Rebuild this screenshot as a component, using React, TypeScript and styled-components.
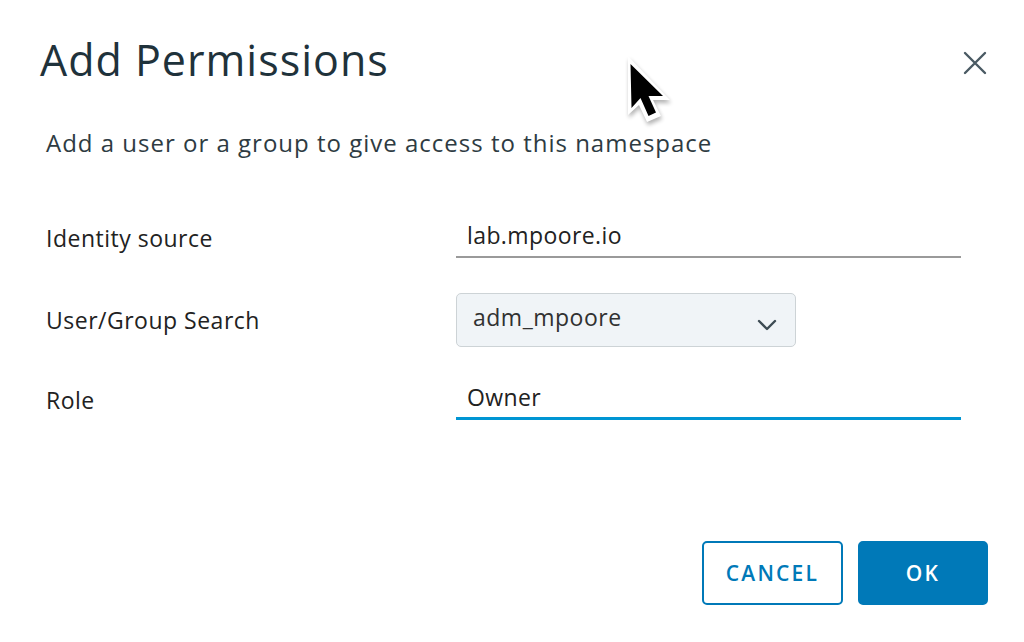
import React from "react";
import styled, { createGlobalStyle } from "styled-components";

const GlobalStyle = createGlobalStyle`
  html, body {
    margin: 0;
    padding: 0;
    background: #fff;
  }
  body {
    font-family: "Open Sans", "Liberation Sans", sans-serif;
    color: #333;
  }
`;

const Modal = styled.div`
  position: relative;
  width: 1024px;
  height: 642px;
  box-sizing: border-box;
  padding: 30px 36px 37px 40px;
  display: flex;
  flex-direction: column;
  background: #fff;
  overflow: hidden;
`;

const Header = styled.div`
  display: flex;
  align-items: flex-start;
  justify-content: space-between;
`;

const Title = styled.h1`
  margin: 0;
  font-size: 43px;
  font-weight: 400;
  line-height: 60px;
  color: #1f323b;
  letter-spacing: 1px;
`;

const CloseButton = styled.button`
  margin-top: 20px;
  width: 26px;
  height: 26px;
  padding: 0;
  border: none;
  background: none;
  display: flex;
  align-items: center;
  justify-content: center;
  cursor: pointer;
`;

const Subtitle = styled.p`
  margin: 38px 0 0 6px;
  font-size: 24px;
  line-height: 30px;
  color: #2e3b42;
  letter-spacing: 1px;
`;

const Form = styled.div`
  margin-top: 40px;
  margin-left: 6px;
  display: grid;
  grid-template-columns: 410px 505px;
`;

const Label = styled.div<{ $h: number }>`
  height: ${(p) => p.$h}px;
  display: flex;
  align-items: center;
  font-size: 23px;
  color: #222;
  letter-spacing: 0.5px;
`;

const Field = styled.div<{ $h: number }>`
  height: ${(p) => p.$h}px;
  display: flex;
  align-items: center;
`;

const LineInput = styled.div<{ $active?: boolean }>`
  width: 100%;
  height: 40px;
  box-sizing: border-box;
  padding: 0 11px 4px;
  display: flex;
  align-items: center;
  font-size: 23px;
  color: #222;
  letter-spacing: 0.4px;
  border-bottom: ${(p) => (p.$active ? "3px solid #0095d3" : "2px solid #9a9a9a")};
`;

const Select = styled.div`
  width: 340px;
  height: 54px;
  box-sizing: border-box;
  padding: 0 18px 6px 16px;
  display: flex;
  align-items: center;
  justify-content: space-between;
  background: #f0f4f7;
  border: 1px solid #cdd3d6;
  border-radius: 5px;
  font-size: 23px;
  color: #313131;
  letter-spacing: 0.5px;
`;

const Chevron = styled.svg`
  margin-top: 16px;
`;

const Footer = styled.div`
  margin-top: auto;
  display: flex;
  justify-content: flex-end;
  gap: 15px;
`;

const Button = styled.button<{ $primary?: boolean }>`
  height: 64px;
  width: ${(p) => (p.$primary ? "130px" : "141px")};
  box-sizing: border-box;
  padding: 0;
  border-radius: 5px;
  border: 2px solid #0079b8;
  background: ${(p) => (p.$primary ? "#0079b8" : "#fff")};
  color: ${(p) => (p.$primary ? "#fff" : "#0079b8")};
  font-family: "Open Sans", "Liberation Sans", sans-serif;
  font-size: 21px;
  font-weight: 600;
  letter-spacing: 2.2px;
  cursor: pointer;
`;

const Pointer = styled.svg`
  position: absolute;
  left: 620px;
  top: 50px;
  pointer-events: none;
`;

const App: React.FC = () => {
  return (
    <>
      <GlobalStyle />
      <Modal>
        <Header>
          <Title>Add Permissions</Title>
          <CloseButton aria-label="Close">
            <svg width="24" height="24" viewBox="0 0 24 24">
              <path
                d="M2 2 L22 22 M22 2 L2 22"
                stroke="#4a5a63"
                strokeWidth="2.4"
                strokeLinecap="round"
              />
            </svg>
          </CloseButton>
        </Header>
        <Subtitle>Add a user or a group to give access to this namespace</Subtitle>
        <Form>
          <Label $h={80}>Identity source</Label>
          <Field $h={80}>
            <LineInput>lab.mpoore.io</LineInput>
          </Field>
          <Label $h={84}>User/Group Search</Label>
          <Field $h={84}>
            <Select>
              adm_mpoore
              <Chevron width="20" height="12" viewBox="0 0 20 12">
                <path
                  d="M2 2 L10 10 L18 2"
                  fill="none"
                  stroke="#3d4b53"
                  strokeWidth="2.4"
                  strokeLinecap="round"
                  strokeLinejoin="round"
                />
              </Chevron>
            </Select>
          </Field>
          <Label $h={76}>Role</Label>
          <Field $h={76}>
            <LineInput $active>Owner</LineInput>
          </Field>
        </Form>
        <Footer>
          <Button>CANCEL</Button>
          <Button $primary>OK</Button>
        </Footer>
        <Pointer width="60" height="80" viewBox="0 0 60 80">
          <defs>
            <filter id="ptr-shadow" x="-30%" y="-30%" width="160%" height="160%">
              <feGaussianBlur stdDeviation="2.2" />
            </filter>
          </defs>
          <path
            d="M8 6 L8 65 L19 55 L27 72 L41 66 L33 50 L50 50 Z"
            fill="#000"
            opacity="0.3"
            filter="url(#ptr-shadow)"
            transform="translate(1 3)"
          />
          <path d="M8 6 L8 65 L19 55 L27 72 L41 66 L33 50 L50 50 Z" fill="#fff" />
          <path
            d="M10.5 14 L11.5 58 L20.5 48 L28.5 66 L36 62.5 L28.5 46 L43 46 Z"
            fill="#000"
          />
        </Pointer>
      </Modal>
    </>
  );
};

export default App;
